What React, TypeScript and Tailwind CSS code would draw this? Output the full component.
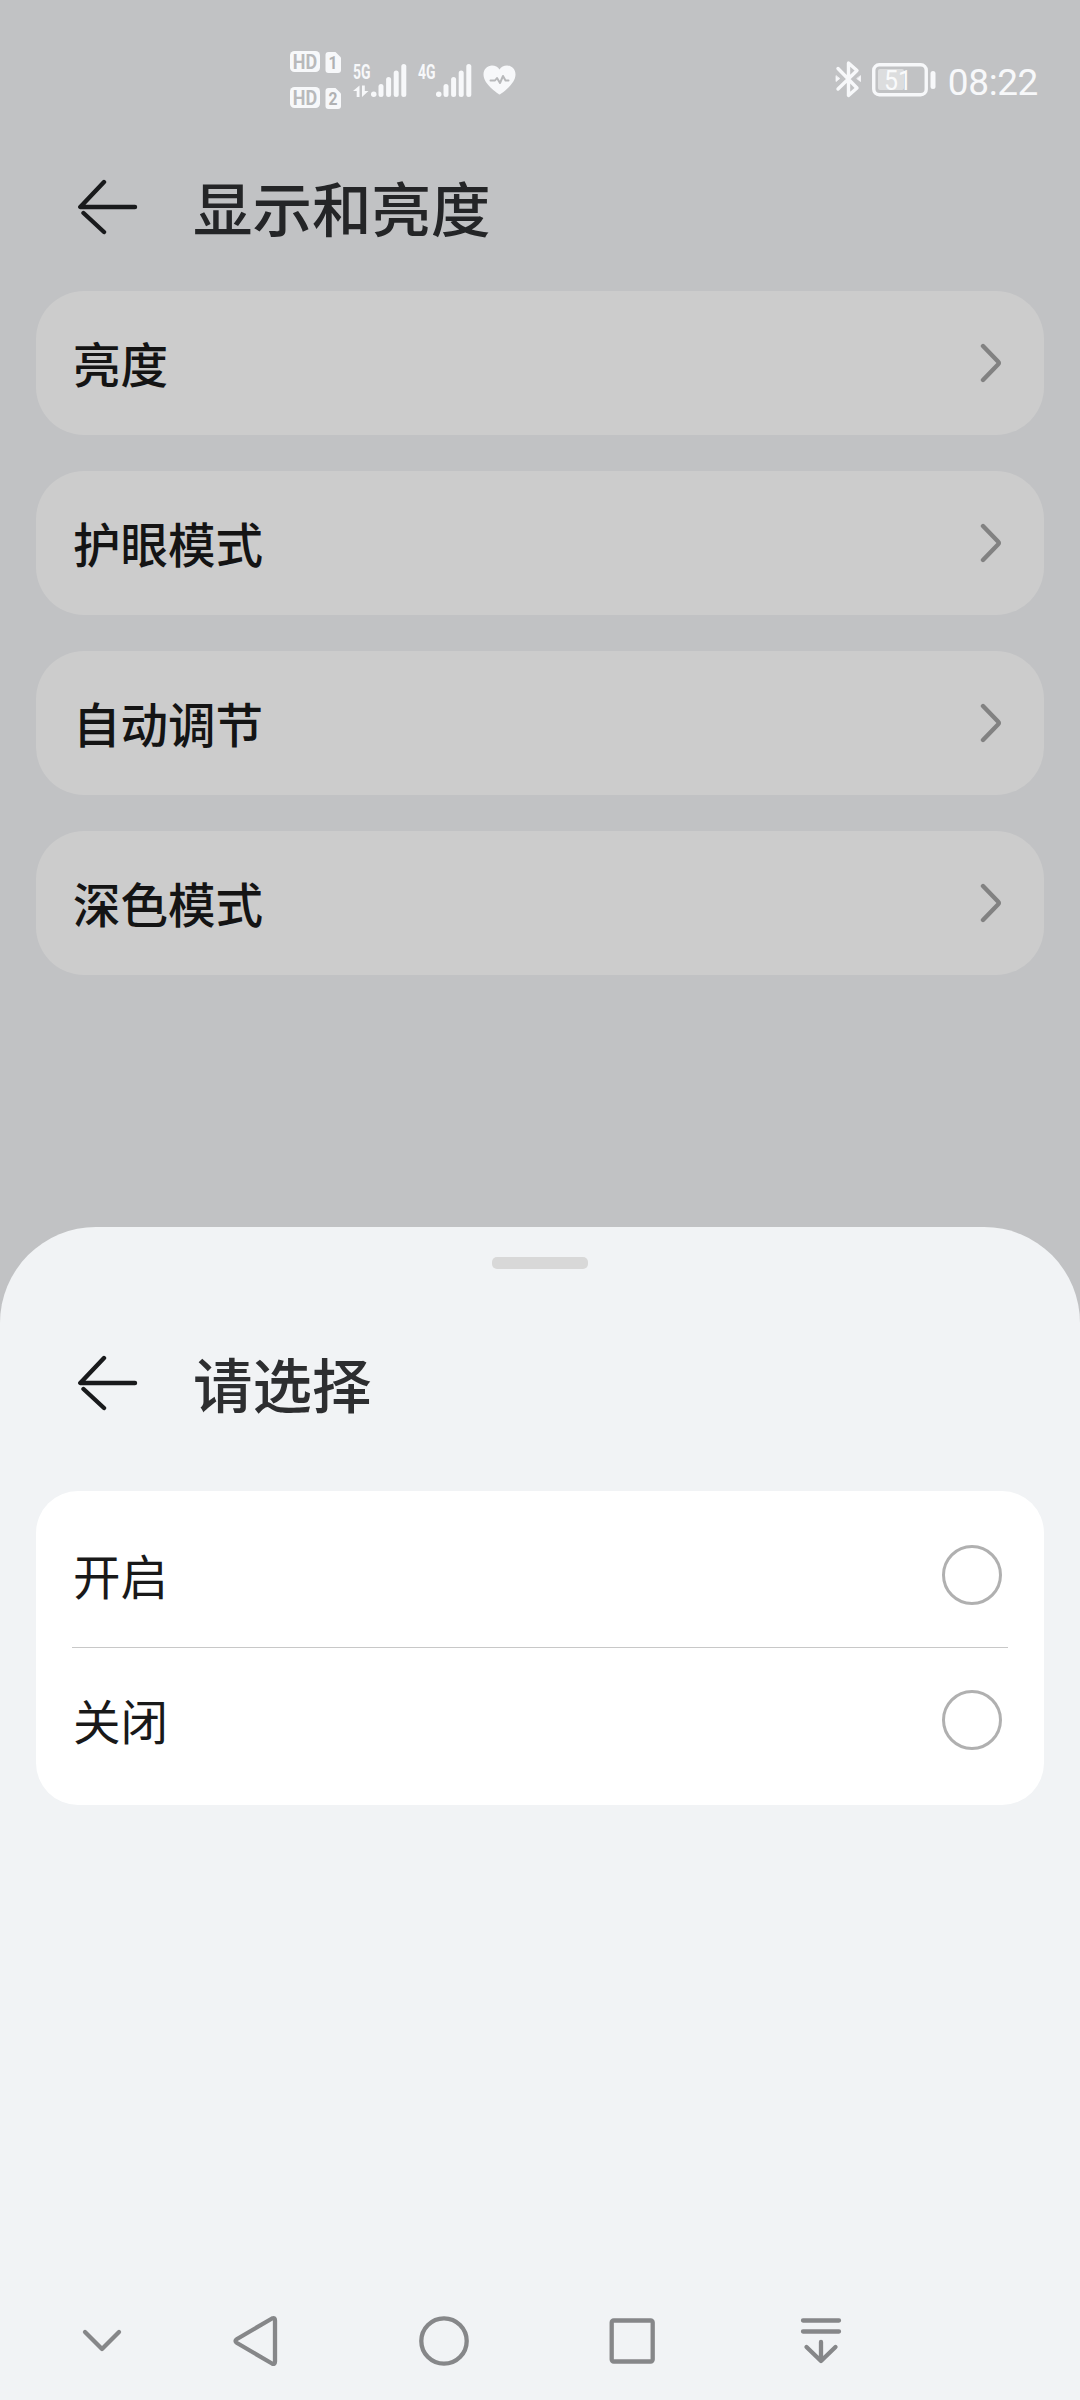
import type { ReactNode } from 'react';

const settings = ['亮度', '护眼模式', '自动调节', '深色模式'];
const options = ['开启', '关闭'];

function HdBadge({ sim }: { sim: number }) {
    return (
        <svg width="52" height="22" viewBox="0 0 52 22" fontFamily="Roboto, sans-serif" fontWeight="700">
            <rect x="0" y="0" width="30" height="21" rx="4.5" fill="#f7f8fa" />
            <text x="2.8" y="17.6" fontSize="20" fill="#b8b9bb" textLength="24.4" lengthAdjust="spacingAndGlyphs">
                HD
            </text>
            <path d="M38.5 1h7l5.500 5.500v12.500a3 3 0 0 1-3 3h-9.500a3 3 0 0 1-3-3V4a3 3 0 0 1 3-3z" fill="#f7f8fa" />
            <text x="43" y="18.3" fontSize="19" fill="#b0b1b3" textAnchor="middle" textLength="9" lengthAdjust="spacingAndGlyphs">
                {sim}
            </text>
        </svg>
    );
}

function Signal({ label, data = false }: { label: string; data?: boolean }) {
    return (
        <svg className="overflow-visible" width="54" height="40" viewBox="0 -4 54 40" fill="#f7f8fa">
            <text x="0" y="16" fontSize="20.500" fontFamily="Roboto, sans-serif" fontWeight="700" textLength="17.5" lengthAdjust="spacingAndGlyphs">
                {label}
            </text>
            {data && <path d="M6.500 22.500v11.500h-2.800v-6H0zM9 22.500v11.500l6.500-6h-3.700v-5.500z" />}
            <rect x="18" y="28.500" width="5.500" height="5.500" rx="2.700" />
            <rect x="25.500" y="21" width="5" height="13" rx="2.500" />
            <rect x="33.100" y="14" width="5" height="20" rx="2.500" />
            <rect x="40.700" y="7.500" width="5" height="26.500" rx="2.500" />
            <rect x="48.300" y="1" width="5" height="33" rx="2.500" />
        </svg>
    );
}

function HeartRate() {
    return (
        <svg width="34" height="30" viewBox="0 0 34 30">
            <path d="M16.500 29.500C14 28 .500 19 .500 9.500.500 4 4.500.500 9 .500c3.200 0 6 1.600 7.500 4C18 2.100 20.800.500 24 .500c4.500 0 8.500 3.500 8.500 9C32.500 19 19 28 16.500 29.500z" fill="#f7f8fa" />
            <path d="M7.500 15.500h4.500l2-2.500 3 5 3-7 2.500 4.500h3" fill="none" stroke="#b8b9bb" strokeWidth="2" strokeLinecap="round" strokeLinejoin="round" />
        </svg>
    );
}

function Bluetooth() {
    return (
        <svg width="27" height="38" viewBox="0 0 27 38" fill="none" stroke="#f7f8fa" strokeWidth="3.4" strokeLinecap="round" strokeLinejoin="round">
            <path d="M3 8.500l19 19.500-8.500 7.500V3l8.500 7.500L3 29" />
            <path d="M1 16v5.500l3.500-2.750zM25.500 16v5.500l-3.500-2.750z" fill="#f7f8fa" strokeWidth="0.800" />
        </svg>
    );
}

function Battery() {
    return (
        <svg width="64" height="34" viewBox="0 0 64 34">
            <rect x="1.750" y="1.750" width="52.500" height="30" rx="5.500" fill="none" stroke="#f7f8fa" strokeWidth="3.400" />
            <rect x="6" y="6" width="26" height="21" rx="2" fill="#dcddde" />
            <rect x="58.500" y="8" width="5" height="18" rx="2.500" fill="#f7f8fa" />
            <text x="12" y="26.500" fontSize="28" fontFamily="Roboto, sans-serif" fill="#f9fafb" textLength="28" lengthAdjust="spacingAndGlyphs">
                51
            </text>
        </svg>
    );
}

function StatusBar() {
    return (
        <div className="flex h-[156px] items-center pt-0.5 pl-[290px] pr-[42px]">
            <div className="flex flex-col gap-[14px] pt-0.5">
                <HdBadge sim={1} />
                <HdBadge sim={2} />
            </div>
            <div className="ml-[11px] flex items-center gap-[11px]">
                <Signal label="5G" data />
                <Signal label="4G" />
            </div>
            <div className="ml-[11px] pt-0.5">
                <HeartRate />
            </div>
            <div className="ml-auto flex items-center">
                <Bluetooth />
                <div className="ml-[10px] pt-px">
                    <Battery />
                </div>
                <span className="ml-3 pt-1.5 font-[Roboto,sans-serif] text-[37px] leading-none tracking-[-0.4px] text-[#f7f8fa]">
                    08:22
                </span>
            </div>
        </div>
    );
}

function Header({ title, className }: { title: string; className: string }) {
    return (
        <header className={`flex items-center gap-[55px] pl-[78px] ${className}`}>
            <svg className="mb-px" width="60" height="56" viewBox="0 0 60 56" fill="none" stroke="#191a1c" strokeWidth="4.400" strokeLinecap="round" strokeLinejoin="round">
                <path d="M26 3L2.300 28H57" />
                <path d="M26 53L5.500 34" />
            </svg>
            <h1 className="text-[59.5px] font-medium leading-none">{title}</h1>
        </header>
    );
}

function SettingRow({ label }: { label: string }) {
    return (
        <div className="flex h-36 items-center justify-between rounded-[48px] bg-[#cccccc] pl-[37px] pr-[42px]">
            <span className="pb-px text-[47.5px] font-medium leading-none text-[#141414]">{label}</span>
            <svg width="22" height="40" viewBox="0 0 22 40" fill="none" stroke="#828282" strokeWidth="4.400" strokeLinecap="round" strokeLinejoin="round">
                <path d="M3 3l15 15.500q1.500 1.500 0 3L3 37" />
            </svg>
        </div>
    );
}

function OptionRow({ label }: { label: string }) {
    return (
        <div className="flex h-[145px] items-center justify-between pr-1.5 last:h-36">
            <span className="pb-px pl-px text-[47.5px] leading-none text-[#191919]">{label}</span>
            <span className="size-[60px] rounded-full border-[3px] border-[#b0b0b0]" />
        </div>
    );
}

function NavIcon({ children }: { children: ReactNode }) {
    return (
        <svg width="60" height="60" viewBox="-30 -30 60 60" fill="none" stroke="#868789" strokeWidth="4.300" strokeLinecap="round" strokeLinejoin="round">
            {children}
        </svg>
    );
}

function NavBar() {
    return (
        <nav className="mt-auto flex h-[118px] items-center pl-[72px]">
            <NavIcon>
                <path d="M-17 -9L0 8L17 -9" />
            </NavIcon>
            <div className="ml-[94px] flex gap-[128px]">
                <NavIcon>
                    <path d="M16 -22.500L-19 -2Q-22 0 -19 2L16 22.500Q19 24 19 20.500V-20.500Q19 -24 16 -22.500z" />
                </NavIcon>
                <NavIcon>
                    <circle r="22.700" />
                </NavIcon>
                <NavIcon>
                    <rect x="-20.300" y="-20.500" width="41" height="41" rx="2" />
                </NavIcon>
                <NavIcon>
                    <path d="M-17 -20.500H19M-17 -9.500H19M1 1V20M-13.500 6L1 20L15.500 6" />
                </NavIcon>
            </div>
        </nav>
    );
}

export default function App() {
    return (
        <div className="flex h-[2400px] w-[1080px] flex-col overflow-hidden bg-[#c1c2c4] font-['Noto_Sans_CJK_SC',sans-serif]" lang="zh-CN">
            <StatusBar />
            <Header title="显示和亮度" className="h-[102px] text-[#242527]" />
            <main className="mt-[33px] flex flex-col gap-9 px-9">
                {settings.map((label) => (
                    <SettingRow key={label} label={label} />
                ))}
            </main>

            <section className="mt-auto flex h-[1173px] flex-col rounded-t-[96px] bg-[#f1f3f5]">
                <div className="mx-auto mt-[30px] h-3 w-24 rounded-[5px] bg-[#d8d8d8]" />
                <Header title="请选择" className="mt-[63px] h-[102px] text-[#2d2e30]" />
                <div className="mx-9 mt-[57px] h-[314px] divide-y divide-[#c8c8c8] rounded-[42px] bg-white px-9 pt-3">
                    {options.map((label) => (
                        <OptionRow key={label} label={label} />
                    ))}
                </div>
                <NavBar />
            </section>
        </div>
    );
}
